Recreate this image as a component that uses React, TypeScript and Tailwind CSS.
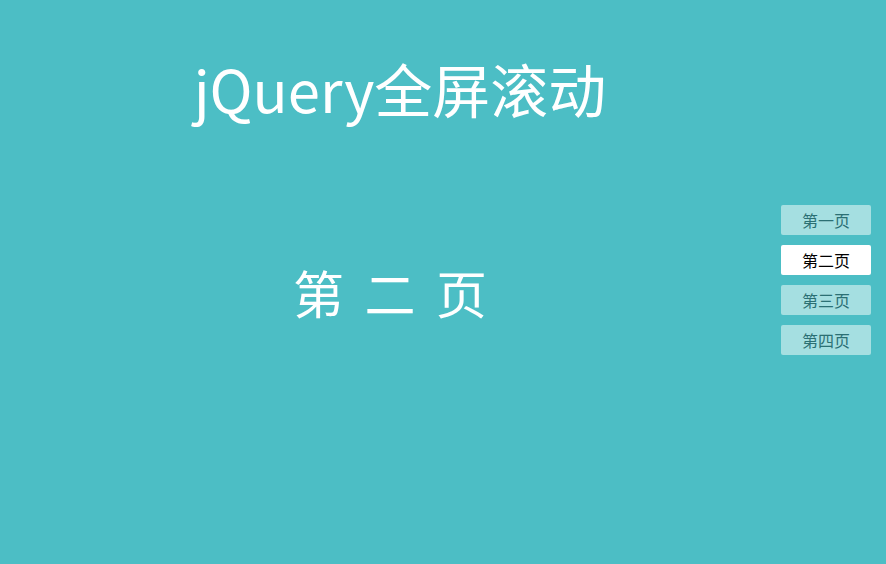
export default function App() {
  const pages = ["第一页", "第二页", "第三页", "第四页"];
  const active = 1;

  return (
    <div
      className="relative w-full h-[564px] overflow-hidden bg-[#4cbec5] text-white"
      style={{ fontFamily: '"Noto Sans CJK SC", "Noto Sans", sans-serif' }}
    >
      {/* section */}
      <div className="flex flex-col w-[800px] pt-[46px]">
        <h1 className="text-center text-[58px] leading-[84px] font-normal">jQuery全屏滚动</h1>
        <div className="w-[780px] mt-[130px] text-center text-[51px] leading-[64px] [word-spacing:9px]">
          第 二 页
        </div>
      </div>

      {/* side nav */}
      <ul className="absolute right-[15px] top-[205px] flex flex-col gap-[10px]">
        {pages.map((p, i) => (
          <li
            key={p}
            className={
              i === active
                ? "w-[90px] h-[30px] rounded-[2px] bg-white text-black text-[16px] flex items-center justify-center"
                : "w-[90px] h-[30px] rounded-[2px] bg-[#a5dfe1] text-[#2b7074] text-[16px] flex items-center justify-center"
            }
          >
            {p}
          </li>
        ))}
      </ul>
    </div>
  );
}
